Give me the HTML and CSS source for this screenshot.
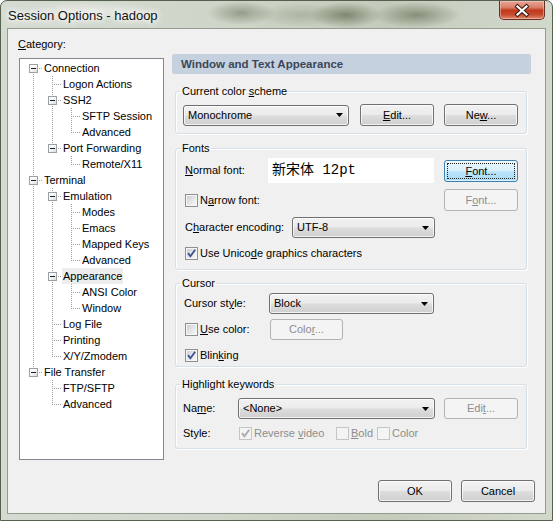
FILE: index.html
```html
<!DOCTYPE html>
<html>
<head>
<meta charset="utf-8">
<title>Session Options - hadoop</title>
<link rel="stylesheet" href="styles.css">
</head>
<body>
<div class="window">
  <div class="titlebar">
    <div class="title">Session Options - hadoop</div>
    <div class="close">
      <svg width="44" height="17" viewBox="0 0 44 17">
        <path d="M17.5 4.5 L26.5 12.5 M26.5 4.5 L17.5 12.5" stroke="#3b1a12" stroke-width="4.2" stroke-linecap="square" fill="none"/>
        <path d="M17.5 4.5 L26.5 12.5 M26.5 4.5 L17.5 12.5" stroke="#ffffff" stroke-width="2.2" stroke-linecap="square" fill="none"/>
      </svg>
    </div>
  </div>
  <div class="client">
    <div class="main">
      <div class="leftcol">
        <div class="cat-label"><u>C</u>ategory:</div>
        <div class="tree">
          <div class="row"><span class="c f"><b class="exp"></b></span><span class="lbl">Connection</span></div>
          <div class="row"><span class="c v"></span><span class="c t"></span><span class="lbl">Logon Actions</span></div>
          <div class="row"><span class="c v"></span><span class="c t"><b class="exp"></b></span><span class="lbl">SSH2</span></div>
          <div class="row"><span class="c v"></span><span class="c v"></span><span class="c t"></span><span class="lbl">SFTP Session</span></div>
          <div class="row"><span class="c v"></span><span class="c v"></span><span class="c l"></span><span class="lbl">Advanced</span></div>
          <div class="row"><span class="c v"></span><span class="c l"><b class="exp"></b></span><span class="lbl">Port Forwarding</span></div>
          <div class="row"><span class="c v"></span><span class="c"></span><span class="c l"></span><span class="lbl">Remote/X11</span></div>
          <div class="row"><span class="c t"><b class="exp"></b></span><span class="lbl">Terminal</span></div>
          <div class="row"><span class="c v"></span><span class="c t"><b class="exp"></b></span><span class="lbl">Emulation</span></div>
          <div class="row"><span class="c v"></span><span class="c v"></span><span class="c t"></span><span class="lbl">Modes</span></div>
          <div class="row"><span class="c v"></span><span class="c v"></span><span class="c t"></span><span class="lbl">Emacs</span></div>
          <div class="row"><span class="c v"></span><span class="c v"></span><span class="c t"></span><span class="lbl">Mapped Keys</span></div>
          <div class="row"><span class="c v"></span><span class="c v"></span><span class="c l"></span><span class="lbl">Advanced</span></div>
          <div class="row"><span class="c v"></span><span class="c t"><b class="exp"></b></span><span class="lbl sel">Appearance</span></div>
          <div class="row"><span class="c v"></span><span class="c v"></span><span class="c t"></span><span class="lbl">ANSI Color</span></div>
          <div class="row"><span class="c v"></span><span class="c v"></span><span class="c l"></span><span class="lbl">Window</span></div>
          <div class="row"><span class="c v"></span><span class="c t"></span><span class="lbl">Log File</span></div>
          <div class="row"><span class="c v"></span><span class="c t"></span><span class="lbl">Printing</span></div>
          <div class="row"><span class="c v"></span><span class="c l"></span><span class="lbl">X/Y/Zmodem</span></div>
          <div class="row"><span class="c l"><b class="exp"></b></span><span class="lbl">File Transfer</span></div>
          <div class="row"><span class="c"></span><span class="c t"></span><span class="lbl">FTP/SFTP</span></div>
          <div class="row"><span class="c"></span><span class="c l"></span><span class="lbl">Advanced</span></div>
        </div>
      </div>

      <div class="panel">
        <div class="panel-header">Window and Text Appearance</div>

        <fieldset class="grp g-scheme">
          <legend>Current color <u>s</u>cheme</legend>
          <div class="frow">
            <div class="combo w-scheme"><span>Monochrome</span><svg class="arr" width="7" height="4" viewBox="0 0 7 4"><path d="M0 0H7L3.5 4Z" fill="#000"/></svg></div>
            <div class="btn gap-edit"><span><u>E</u>dit...</span></div>
            <div class="btn gap-new"><span>Ne<u>w</u>...</span></div>
          </div>
        </fieldset>

        <fieldset class="grp g-fonts">
          <legend>Fonts</legend>
          <div class="frow r-normal">
            <div class="lab col-normal"><u>N</u>ormal font:</div>
            <div class="fontfield">新宋体 12pt</div>
            <div class="btn focus push-right"><span class="focusrect"><u>F</u>ont...</span></div>
          </div>
          <div class="frow r-narrow">
            <span class="chk"></span>
            <span class="chklab">N<u>a</u>rrow font:</span>
            <div class="btn disabled push-right"><span>F<u>o</u>nt...</span></div>
          </div>
          <div class="frow r-enc">
            <div class="lab col-enc">C<u>h</u>aracter encoding:</div>
            <div class="combo w-enc"><span>UTF-8</span><svg class="arr" width="7" height="4" viewBox="0 0 7 4"><path d="M0 0H7L3.5 4Z" fill="#000"/></svg></div>
          </div>
          <div class="frow r-check">
            <span class="chk"><svg width="11" height="11" viewBox="0 0 11 11"><path d="M2 5.2 L4.4 8.2 L9.2 1.8" fill="none" stroke="#3d5693" stroke-width="1.9"/></svg></span>
            <span class="chklab">Use Unico<u>d</u>e graphics characters</span>
          </div>
        </fieldset>

        <fieldset class="grp g-cursor">
          <legend>Cursor</legend>
          <div class="frow r-style">
            <div class="lab col-cstyle">Cursor st<u>y</u>le:</div>
            <div class="combo w-block"><span>Block</span><svg class="arr" width="7" height="4" viewBox="0 0 7 4"><path d="M0 0H7L3.5 4Z" fill="#000"/></svg></div>
          </div>
          <div class="frow r-usecolor">
            <div class="chkgroup col-usecolor">
              <span class="chk"></span>
              <span class="chklab"><u>U</u>se color:</span>
            </div>
            <div class="btn disabled w-color"><span>Colo<u>r</u>...</span></div>
          </div>
          <div class="frow r-check">
            <span class="chk"><svg width="11" height="11" viewBox="0 0 11 11"><path d="M2 5.2 L4.4 8.2 L9.2 1.8" fill="none" stroke="#3d5693" stroke-width="1.9"/></svg></span>
            <span class="chklab">Blin<u>k</u>ing</span>
          </div>
        </fieldset>

        <fieldset class="grp g-high">
          <legend>Highlight keywords</legend>
          <div class="frow r-name">
            <div class="lab col-name">Na<u>m</u>e:</div>
            <div class="combo w-name"><span>&lt;None&gt;</span><svg class="arr" width="7" height="4" viewBox="0 0 7 4"><path d="M0 0H7L3.5 4Z" fill="#000"/></svg></div>
            <div class="btn disabled h21 push-right"><span>Edi<u>t</u>...</span></div>
          </div>
          <div class="frow r-hstyle">
            <div class="lab col-hstyle">Style:</div>
            <div class="chkgroup col-rev">
              <span class="chk dis"><svg width="11" height="11" viewBox="0 0 11 11"><path d="M2 5.2 L4.4 8.2 L9.2 1.8" fill="none" stroke="#a9a9a9" stroke-width="1.9"/></svg></span>
              <span class="chklab grey">Reverse <u>v</u>ideo</span>
            </div>
            <div class="chkgroup col-bold">
              <span class="chk dis"></span>
              <span class="chklab grey"><u>B</u>old</span>
            </div>
            <div class="chkgroup">
              <span class="chk dis"></span>
              <span class="chklab grey">Color</span>
            </div>
          </div>
        </fieldset>
      </div>
    </div>

    <div class="footer">
      <div class="btn"><span>OK</span></div>
      <div class="btn"><span>Cancel</span></div>
    </div>
  </div>
</div>
</body>
</html>
```

FILE: styles.css
```css
* { box-sizing: border-box; }
html, body { margin: 0; padding: 0; }
body {
  width: 553px;
  height: 521px;
  overflow: hidden;
  background: #ffffff;
  font-family: "Liberation Sans", Arial, sans-serif;
  font-size: 11px;
  line-height: 13px;
  color: #000;
}
u { text-decoration: underline; text-underline-offset: 1px; }

/* ---------- window frame ---------- */
.window {
  width: 553px;
  height: 521px;
  border: 1px solid #56604f;
  border-radius: 7px 7px 0 0;
  padding: 0 6px 6px 6px;
  display: flex;
  flex-direction: column;
  background:
    radial-gradient(ellipse 34px 12px at 240px 12px, rgba(80, 92, 62, 0.45), transparent),
    radial-gradient(ellipse 46px 12px at 300px 14px, rgba(120, 128, 96, 0.35), transparent),
    radial-gradient(ellipse 36px 13px at 345px 14px, rgba(66, 76, 48, 0.55), transparent),
    radial-gradient(ellipse 44px 13px at 415px 14px, rgba(70, 80, 52, 0.5), transparent),
    radial-gradient(ellipse 70px 10px at 90px 10px, rgba(255, 255, 255, 0.45), transparent),
    linear-gradient(to right, #d6dbd2 0%, #cfd5c9 40%, #c4cbbb 70%, #d3d8cd 100%);
}
.titlebar {
  height: 27px;
  display: flex;
  justify-content: space-between;
  align-items: flex-start;
  flex: none;
}
.title {
  margin: 7px 0 0 1px;
  font-size: 13px;
  line-height: 15px;
  color: #111;
  text-shadow: 0 0 5px #fff, 0 0 8px #fff, 0 0 10px #fff;
}
.close {
  width: 46px;
  height: 19px;
  margin-right: 1px;
  border: 1px solid #6b2f22;
  border-top: none;
  border-radius: 0 0 5px 5px;
  background: linear-gradient(to bottom, #e9a595 0%, #d9806b 35%, #c0391c 52%, #c84a2d 75%, #e08a6e 100%);
  box-shadow: inset 0 0 0 1px rgba(255, 220, 210, 0.45);
  display: flex;
  align-items: center;
  justify-content: center;
}
.close svg { display: block; }

.client {
  height: 486px;
  border: 1px solid #949c90;
  background: #f0f0f0;
  padding: 9px 0 0 10px;
  display: flex;
  flex-direction: column;
  flex: none;
}
.main { display: flex; align-items: flex-start; }

/* ---------- left column / tree ---------- */
.leftcol { width: 147px; flex: none; }
.cat-label { height: 13px; }
.tree {
  margin: 7px 0 0 1px;
  width: 145px;
  height: 402px;
  border: 1px solid #828790;
  background: #fff;
  padding: 1px 0 0 4px;
}
.row { display: flex; height: 16px; align-items: center; white-space: nowrap; }
.c {
  width: 19px;
  height: 16px;
  flex: none;
  display: flex;
  align-items: flex-start;
}
.v {
  background: repeating-linear-gradient(to bottom, #a0a0a0 0 1px, transparent 1px 2px) 9px 0 / 1px 16px no-repeat;
}
.t {
  background:
    repeating-linear-gradient(to right, #a0a0a0 0 1px, transparent 1px 2px) 11px 8px / 8px 1px no-repeat,
    repeating-linear-gradient(to bottom, #a0a0a0 0 1px, transparent 1px 2px) 9px 0 / 1px 16px no-repeat;
}
.l {
  background:
    repeating-linear-gradient(to right, #a0a0a0 0 1px, transparent 1px 2px) 11px 8px / 8px 1px no-repeat,
    repeating-linear-gradient(to bottom, #a0a0a0 0 1px, transparent 1px 2px) 9px 0 / 1px 9px no-repeat;
}
.f {
  background:
    repeating-linear-gradient(to right, #a0a0a0 0 1px, transparent 1px 2px) 11px 8px / 8px 1px no-repeat,
    repeating-linear-gradient(to bottom, #a0a0a0 0 1px, transparent 1px 2px) 9px 8px / 1px 8px no-repeat;
}
.exp {
  width: 9px;
  height: 9px;
  margin: 4px 0 0 5px;
  border: 1px solid #98a0a8;
  background: linear-gradient(135deg, #ffffff 30%, #dcdcdc 100%);
  display: flex;
  align-items: center;
  justify-content: center;
}
.exp::after {
  content: "";
  width: 5px;
  height: 1px;
  background: #1b1b1b;
}
.lbl { padding: 0 1px; line-height: 16px; height: 16px; }
.lbl.sel { background: #ededed; }

/* ---------- right panel ---------- */
.panel { width: 359px; margin-left: 7px; flex: none; }
.panel-header {
  margin-top: 16px;
  height: 20px;
  border-radius: 2px;
  background: #c6d1e0;
  color: #3b4858;
  font-weight: bold;
  font-size: 11.5px;
  line-height: 20px;
  padding-left: 9px;
}
.grp {
  margin: 0 0 0 3px;
  width: 352px;
  border: 1px solid #d5dfe5;
  border-radius: 3px;
  padding: 0 8px 0 7px;
  min-width: 0;
  box-shadow: inset 1px 1px 0 #fff, 1px 1px 0 #fff;
}
.grp legend {
  margin-left: -2px;
  padding: 0 1px;
  line-height: 13px;
  height: 13px;
}
.g-scheme { margin-top: 11px; padding-top: 6px; padding-bottom: 7px; }
.g-fonts { margin-top: 8px; padding-top: 3px; padding-bottom: 8px; }
.g-cursor { margin-top: 7px; padding-top: 3px; padding-bottom: 3px; }
.g-high { margin-top: 11px; padding-top: 7px; padding-bottom: 7px; }

.frow { display: flex; align-items: center; white-space: nowrap; }
.r-normal { height: 25px; }
.r-narrow { height: 22px; margin-top: 6px; }
.r-enc { height: 21px; margin-top: 6px; }
.r-check { height: 16px; margin-top: 7px; }
.r-style { height: 21px; }
.r-usecolor { height: 21px; margin-top: 5px; }
.r-name { height: 21px; }
.r-hstyle { height: 16px; margin-top: 6px; }

.lab { flex: none; padding-left: 2px; }
.col-normal { width: 85px; }
.col-enc { width: 109px; }
.col-cstyle { width: 86px; padding-left: 1px; }
.col-name { width: 55px; padding-left: 0; }
.col-hstyle { width: 56px; padding-left: 0; }
.chkgroup { display: flex; align-items: center; flex: none; }
.col-usecolor { width: 87px; }
.col-rev { width: 97px; }
.col-bold { width: 41px; }
.col-usecolor .chk { margin-left: 2px; }

.fontfield {
  width: 166px;
  height: 25px;
  flex: none;
  background: #fff;
  padding-left: 4px;
  font-family: "Liberation Mono", "Noto Sans CJK SC", monospace;
  font-size: 14px;
  line-height: 25px;
}

/* buttons */
.btn {
  width: 74px;
  height: 22px;
  flex: none;
  border: 1px solid #707070;
  border-radius: 3px;
  background: linear-gradient(to bottom, #f2f2f2 0%, #ebebeb 48%, #dddddd 52%, #cfcfcf 100%);
  box-shadow: inset 0 0 0 1px rgba(255, 255, 255, 0.75);
  display: flex;
  align-items: center;
  justify-content: center;
}
.btn.h21 { height: 21px; }
.btn.disabled {
  border-color: #b1b4b6;
  background: #f4f4f4;
  box-shadow: none;
  color: #8d8d8d;
}
.btn.focus {
  border-color: #3c7fb1;
  background: linear-gradient(to bottom, #eaf6fd 0%, #d9f0fc 48%, #bee6fd 52%, #a7d9f5 100%);
  box-shadow: inset 0 0 0 1px rgba(255, 255, 255, 0.6);
}
.focusrect {
  width: 66px;
  height: 14px;
  outline: 1px dotted #222;
  outline-offset: 0;
  text-align: center;
  line-height: 14px;
}
.push-right { margin-left: auto; }
.gap-edit { margin-left: 11px; }
.gap-new { margin-left: 10px; }
.w-color { width: 73px; height: 21px; }

/* combos */
.combo {
  height: 21px;
  flex: none;
  border: 1px solid #707070;
  border-radius: 3px;
  background: linear-gradient(to bottom, #f2f2f2 0%, #ebebeb 48%, #dddddd 52%, #cfcfcf 100%);
  box-shadow: inset 0 0 0 1px rgba(255, 255, 255, 0.75);
  display: flex;
  align-items: center;
  justify-content: space-between;
  padding: 0 5px 0 4px;
}
.arr { display: block; }
.w-scheme { width: 166px; }
.w-enc { width: 143px; }
.w-block { width: 165px; }
.w-name { width: 197px; }

/* checkboxes */
.chk {
  width: 13px;
  height: 13px;
  flex: none;
  border: 1px solid #8e8f8f;
  background: linear-gradient(135deg, #c8ccd2 0%, #eeeeef 70%, #f8f8f8 100%);
  box-shadow: inset 0 0 0 1px #f6f6f6;
  display: flex;
  align-items: center;
  justify-content: center;
}
.frow > .chk { margin-left: 2px; }
.chk.dis {
  border-color: #c5c5c5;
  background: #f4f4f4;
  box-shadow: none;
}
.chk svg { display: block; }
.chklab { margin-left: 2px; }
.chklab.grey { color: #8d8d8d; }

/* footer */
.footer {
  margin-top: 20px;
  padding-right: 10px;
  display: flex;
  justify-content: flex-end;
  gap: 9px;
}
```
